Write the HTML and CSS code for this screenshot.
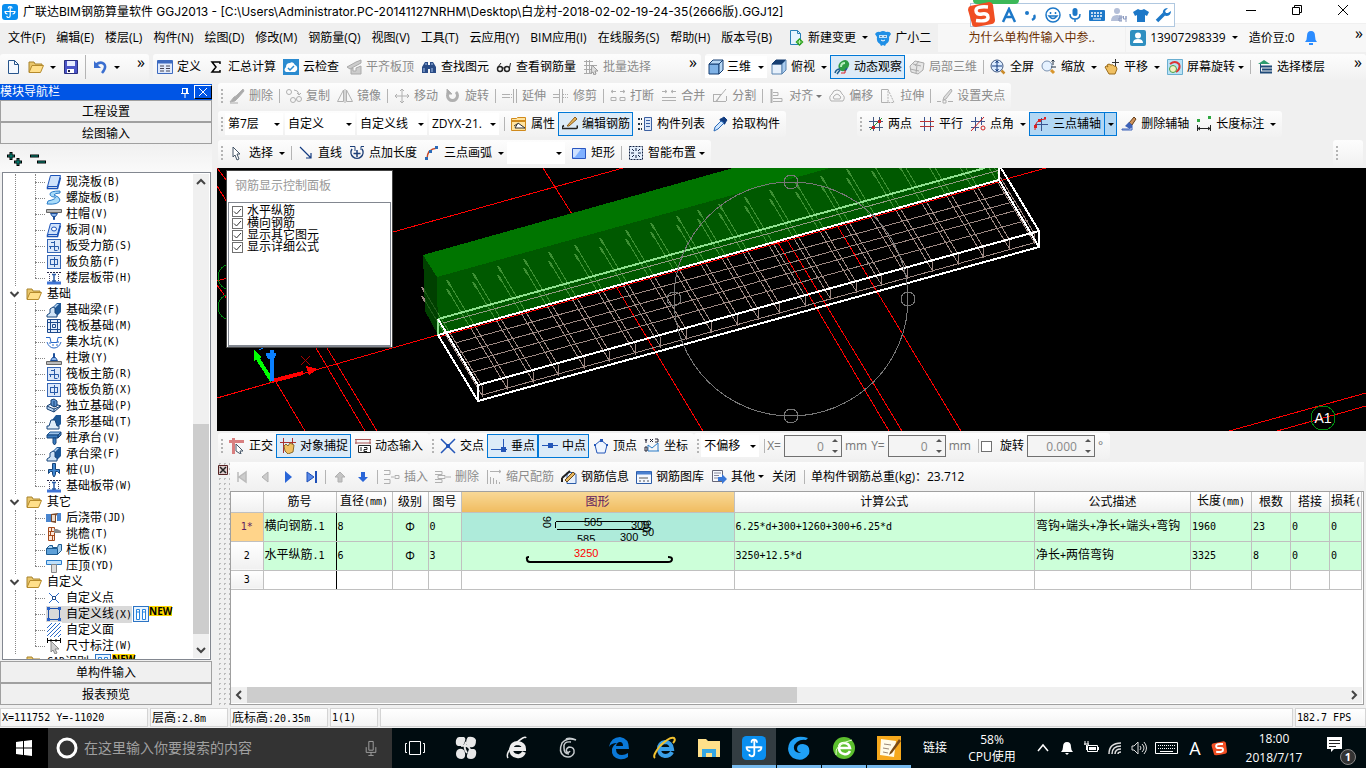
FILE: index.html
```
<!DOCTYPE html>
<html lang="zh-CN">
<head>
    <meta charset="UTF-8">
    <meta name="viewport" content="width=device-width, initial-scale=1.0">
    <title>广联达BIM钢筋算量软件 GGJ2013</title>
    <link rel="stylesheet" href="styles.css">
</head>
<body>
    <!-- shared icons -->
    <svg class="sprite" aria-hidden="true">
        <symbol id="logo" viewBox="0 0 16 16"><rect width="16" height="16" rx="3" fill="#0a8ff0"/><path d="M10 4.500q0-2-2-2t-1.500 2M8.200 3v8.500q0 2-1.700 2t-1.500-1.500M3 7.500h10M3 7q0 3 2.500 3M13 7q0 3-2.500 3" stroke="#fff" stroke-width="1.200" fill="none"/></symbol>
        <symbol id="folder" viewBox="0 0 16 16"><path d="M1 13V3h5l1 2h7v2" fill="#e9c66b" stroke="#a8832c"/><path d="M1 13.500L4 6.500h11.500l-3 7z" fill="#ffdf8a" stroke="#b58a2c"/></symbol>
        <symbol id="slab" viewBox="0 0 16 16"><path d="M4.500 1.500h10l-3 11h-10z" fill="#cfe2fb" stroke="#1a52b8"/><path d="M1.500 12.500v2h10l3-11" fill="none" stroke="#1a52b8" stroke-width="1.500"/></symbol>
        <symbol id="rebar" viewBox="0 0 16 16"><rect x="1.500" y="1.500" width="13" height="13" fill="#dce8fa" stroke="#3566b5"/><path d="M4 5.500h8M4 10.500h8M8.500 3v10M4.500 5v6M11.500 5v6" stroke="#2a5ba8" fill="none"/></symbol>
        <symbol id="cross" viewBox="0 0 16 16"><rect x="1.500" y="1.500" width="13" height="13" fill="#dce8fa" stroke="#3566b5"/><path d="M3 8.500h9.500v3M8.500 3v9.500h3M4.500 8v3M8 4.500H5" stroke="#2a5ba8" fill="none"/></symbol>
        <symbol id="band" viewBox="0 0 16 16"><path d="M1 2.500h14" stroke="#224" stroke-dasharray="2 1"/><path d="M1 13h14" stroke="#3f74d6" stroke-width="3"/><path d="M3.500 4v7M12.500 4v7" stroke="#446" stroke-dasharray="1 1"/><path d="M8 4v8M6 4.500h4M6 11h4" stroke="#2a5ba8" stroke-width="1.500"/></symbol>
        <symbol id="beam" viewBox="0 0 16 16"><path d="M6 6L11 1h4v9l-4 4z" fill="#1d5796"/><path d="M7 6l4-4h2L9 6z" fill="#b7d6f3"/><path d="M1 15v-2l3-2V7l3-2 2 1v5l2 1v3z" fill="#cfe3f6" stroke="#17457a"/></symbol>
        <symbol id="pile" viewBox="0 0 16 16"><path d="M1 5l3-3h11l-3 3z" fill="#9cc3ea" stroke="#1d5796"/><path d="M1 5h11v3H1zM12 5l3-3v3l-3 3z" fill="#3a7cc0" stroke="#17457a"/><path d="M7 8h3v5l-1.500 2L7 13z" fill="#3a7cc0" stroke="#17457a"/></symbol>
        <symbol id="twin" viewBox="0 0 16 16"><rect x=".5" y=".5" width="15" height="15" fill="#eaf5ff" stroke="#2d74c4"/><path d="M3.500 3.500h3v10h-3zM9.500 3.500h3v10h-3zM4 6h2M10 6h2" fill="#fff" stroke="#2684e0"/></symbol>
        <symbol id="ssogou" viewBox="0 0 28 26"><path d="M3 5L22 1q3 0 4 3l2 15q0 3-3 4L9 26q-4 0-4-3L1 9q0-3 2-4z" fill="#f04e23"/><path d="M21 6Q9 5 9 9.500t6 3.500 6 3.500-12 3" fill="none" stroke="#fff" stroke-width="3.500"/></symbol>
    </svg>

    <header class="titlebar">
        <svg class="ico"><use href="#logo"/></svg>
        <h1>广联达BIM钢筋算量软件 GGJ2013 - [C:\Users\Administrator.PC-20141127NRHM\Desktop\白龙村-2018-02-02-19-24-35(2666版).GGJ12]</h1>
        <div class="win-btns">
            <button aria-label="最小化"><svg class="ico" viewBox="0 0 16 16"><path d="M3 8.500h10" stroke="#000"/></svg></button>
            <button aria-label="还原"><svg class="ico" viewBox="0 0 16 16"><path d="M3.500 5.500h7v7h-7zM5.500 5V3.500h7v7H11" stroke="#000"/></svg></button>
            <button aria-label="关闭"><svg class="ico" viewBox="0 0 16 16"><path d="M3 3l10 10M13 3L3 13" stroke="#000"/></svg></button>
        </div>
    </header>

    <nav class="menubar">
        <button>文件(F)</button><button>编辑(E)</button><button>楼层(L)</button><button>构件(N)</button><button>绘图(D)</button><button>修改(M)</button><button>钢筋量(Q)</button><button>视图(V)</button><button>工具(T)</button><button>云应用(Y)</button><button>BIM应用(I)</button><button>在线服务(S)</button><button>帮助(H)</button><button>版本号(B)</button>
        <button class="tb change"><svg class="ico" viewBox="0 0 16 16"><path d="M2.500.5h7l3 3v11h-10z" fill="#e6f4ff" stroke="#2a80b8"/><path d="M9.500.5v3h3" stroke="#2a80b8"/><path d="M11.500 8l4 4-4 4-4-4z" fill="#2ea31e"/><path d="M9.500 12h4M11.500 10v4" stroke="#bdf0b0"/></svg>新建变更<i class="dd"></i></button>
        <button class="tb"><svg class="ico" viewBox="0 0 16 16"><path d="M0 4q2-3 5-2 3-2 6 0 4-1 5 2l-2 3q1 5-3 7l-1 2-2-1-2 1-1-2Q1 12 2 7z" fill="#1f8fe6"/><path d="M4 5h8v3H4z" fill="#bfe4ff"/><path d="M6 6v1M10 6v1" stroke="#124"/><path d="M6 10q2 2 4 0" stroke="#fff"/></svg>广小二</button>
        <a class="tip" href="#">为什么单构件输入中参..</a>
        <div class="account">
            <button class="tb"><svg class="ico" viewBox="0 0 16 16"><rect width="16" height="16" rx="2" fill="#2f8fc0"/><circle cx="8" cy="5.500" r="3" fill="#fff"/><path d="M3 13q0-4 5-4t5 4z" fill="#fff"/></svg>13907298339<i class="dd"></i></button>
            <span class="beans">造价豆:0</span>
            <svg class="ico" viewBox="0 0 16 16"><path d="M2 12q2-2 2-6 0-5 4-5t4 5q0 4 2 6z" fill="#2b8cff"/><path d="M6 14h4" stroke="#2b8cff" stroke-width="2"/></svg>
            <button class="more">»</button>
        </div>
    </nav>

    <div class="toolrow main-tools">
        <div class="group g-file">
            <button class="tb" aria-label="新建"><svg class="ico" viewBox="0 0 16 16"><path d="M3.500 1.500h6l4 4v9h-10z" fill="#f4f9ff" stroke="#27558c"/><path d="M9.500 1.500v4h4" stroke="#27558c"/></svg></button>
            <button class="tb" aria-label="打开"><svg class="ico"><use href="#folder"/></svg><i class="dd"></i></button>
            <button class="tb" aria-label="保存"><svg class="ico" viewBox="0 0 16 16"><path d="M1.500 1.500h13v13h-13z" fill="#4b55c8" stroke="#2a2f80"/><path d="M4 2h8v5H4z" fill="#e8ecff"/><path d="M4 10h7v4H4z" fill="#fff"/><path d="M6 11v2" stroke="#224" stroke-width="2"/></svg></button>
            <i class="sep tall"></i>
            <button class="tb" aria-label="撤销"><svg class="ico" viewBox="0 0 16 16"><path d="M4 5.500Q9 2 12 5t-2 9" stroke="#3b6fd0" stroke-width="2.500"/><path d="M2 2v7h7z" fill="#3b6fd0"/></svg><i class="dd"></i></button>
            <button class="more">»</button>
        </div>
        <div class="group g-calc">
            <button class="tb"><svg class="ico" viewBox="0 0 16 16"><path d="M.5 1.500h15v13H.5z" fill="#dfe9fb" stroke="#3d6ac0"/><path d="M1 3h14" stroke="#3d6ac0" stroke-width="3"/><path d="M3 7h4M3 9.500h4M3 12h4M9 7h4M9 9.500h4M9 12h4" stroke="#445"/></svg>定义</button>
            <button class="tb"><svg class="ico" viewBox="0 0 16 16"><path d="M12 5V3H4l4 5-4 5h8v-2" stroke="#000" stroke-width="1.500"/></svg>汇总计算</button>
            <button class="tb"><svg class="ico" viewBox="0 0 16 16"><path d="M0 0h16v16H0z" fill="#2b8bd0"/><path d="M3 13q-3-2 0-5 0-4 4-4 3-2 5 2 3 1 2 5l-2 2z" fill="#fff"/><path d="M5 9l2 2 4-4" stroke="#2b8bd0" stroke-width="1.500"/></svg>云检查</button>
            <button class="tb" disabled><svg class="ico" viewBox="0 0 16 16"><path d="M1 8l9-5 5-2v3L4 10zM5 10v5h10V7l-5 2v3H7v-3z" fill="#ccc" stroke="#aaa"/></svg>平齐板顶</button>
            <button class="tb"><svg class="ico" viewBox="0 0 16 16"><path d="M4 3h3v11H1V8zM9 3h3l3 5v6H9zM7 6h2v4H7z" fill="#2a4c86"/><path d="M3 9v4M11 9v4M5 4v2M11 4v2" stroke="#a9c5ee"/></svg>查找图元</button>
            <button class="tb"><svg class="ico" viewBox="0 0 16 16"><circle cx="4" cy="10" r="2.500" stroke="#222" stroke-width="1.500"/><circle cx="11" cy="10" r="2.500" stroke="#222" stroke-width="1.500"/><path d="M2 8l3-4M13.500 9l1-5M6.500 9h2" stroke="#222"/></svg>查看钢筋量</button>
            <button class="tb" disabled><svg class="ico" viewBox="0 0 16 16"><path d="M1 2.500h9M1 6.500h13M1 10.500h8M1 14.500h8M3.500 1v14M6.500 1v14" stroke="#aaa"/><path d="M9 6l6 6h-3l1 3-2 1-1-3-2 1z" fill="#ddd" stroke="#999"/></svg>批量选择</button>
            <button class="more">»</button>
        </div>
        <div class="group g-view">
            <span class="combo iconed"><svg class="ico" viewBox="0 0 16 16"><path d="M1 5h10v10H1z" fill="#7fb2e6" stroke="#163f73"/><path d="M1 5l4-4h10l-4 4zM11 5l4-4v10l-4 4z" fill="#b9d8f5" stroke="#163f73"/></svg><select aria-label="视图模式"><option>三维</option></select></span>
            <button class="tb"><svg class="ico" viewBox="0 0 16 16"><path d="M1 5h10v10H1z" fill="#e6f0fb" stroke="#5a84b0"/><path d="M1 5l4-4h10l-4 4z" fill="#163f73" stroke="#163f73"/><path d="M11 5l4-4v10l-4 4z" fill="#a9cbee" stroke="#5a84b0"/></svg>俯视<i class="dd"></i></button>
            <button class="tb on"><svg class="ico" viewBox="0 0 16 16"><path d="M5 10Q3 5 8 2t7 2q1 4-3 7t-7-1z" fill="#2e9b45"/><path d="M7 8q0-4 4-4" stroke="#b8f0c0" stroke-width="2"/><path d="M1 14q1-4 5-4M3 15l3-4M11 12l2-3" stroke="#1e5f8f" stroke-width="1.500"/><path d="M7 14h4v-3" stroke="#d22"/></svg>动态观察</button>
            <button class="tb" disabled><svg class="ico" viewBox="0 0 16 16"><path d="M1 7l5-5 9 2-1 7-5 4-7-2zM4 5l8 2M1 10l9 2M10 2l-4 5M8 6l-1 8" fill="#e6e6e6" stroke="#aaa"/></svg>局部三维</button>
            <i class="sep"></i>
            <button class="tb"><svg class="ico" viewBox="0 0 16 16"><circle cx="7" cy="7" r="6" fill="#dcecff" stroke="#405880"/><path d="M7 2v10M2 7h10M5.500 4L7 2l1.500 2M5.500 10L7 12l1.500-2" stroke="#123a80"/><path d="M11.500 11.500l3 3" stroke="#c98a2a" stroke-width="2.500"/></svg>全屏</button>
            <button class="tb"><svg class="ico" viewBox="0 0 16 16"><circle cx="6" cy="7" r="5" fill="#e6f2ff" stroke="#7b92b0"/><path d="M10 11l3 3" stroke="#d8952c" stroke-width="3"/><path d="M12 1v5M10.500 2.500L12 1l1.500 1.500M10 8h5" stroke="#234"/></svg>缩放<i class="dd"></i></button>
            <button class="tb"><svg class="ico" viewBox="0 0 16 16"><path d="M1 8q1-2 3 0l-1-2q2-2 4 0 2-1 3 1 3 0 3 3l-2 5H5z" fill="#f0c062" stroke="#9b6c1c"/><path d="M11.500 0v7M8 3.500h7" stroke="#333"/></svg>平移<i class="dd"></i></button>
            <button class="tb"><svg class="ico" viewBox="0 0 16 16"><path d="M.5.5h15v15H.5z" fill="#b9e2f5" stroke="#6aaed0"/><path d="M3 5q5-4 9 0 2 5-3 8" stroke="#d33" stroke-width="2"/><circle cx="6" cy="10" r="3.500" fill="#f5f0c0" stroke="#49a048"/></svg>屏幕旋转<i class="dd tight"></i></button>
            <i class="sep"></i>
            <button class="tb"><svg class="ico" viewBox="0 0 16 16"><path d="M1 5l6-4 6 4z" fill="#2c9b6e"/><path d="M3 7.500h12M5 10.500h10M3 13.500h12" stroke="#1f4a78" stroke-width="2"/><path d="M3.500 5v9" stroke="#1f4a78"/></svg>选择楼层</button>
            <button class="more">»</button>
        </div>
    </div>

    <main class="workspace">
        <aside class="sidebar">
            <div class="side-head"><h2>模块导航栏</h2>
                <button class="pin" aria-label="固定"><svg viewBox="0 0 12 12"><path d="M3.500 2v5M8.500 2v5M3 2.500h6M2 7.500h8M6 8v4M7.500 3v4" stroke="#fff"/></svg></button>
                <button class="x" aria-label="关闭"><svg viewBox="0 0 12 12"><path d="M2 2l8 8M10 2l-8 8" stroke="#fff"/></svg></button>
            </div>
            <button class="side-btn">工程设置</button>
            <button class="side-btn">绘图输入</button>
            <div class="tree-tools">
                <button aria-label="全部展开"><svg class="ico" viewBox="0 0 16 16"><path d="M0 5h8M4 1v8M7 11h8M11 7v8" stroke="#000" stroke-width="3"/><path d="M1 5h6M4 2v6M8 11h6M11 8v6" stroke="#0a9a8a"/></svg></button>
                <button aria-label="全部折叠"><svg class="ico" viewBox="0 0 16 16"><path d="M0 5h9M7 11h9" stroke="#000" stroke-width="3"/><path d="M1 5h7M8 11h7" stroke="#0a9a8a"/></svg></button>
            </div>
            <div class="tree">
                <ul class="tree-list">
                    <li class="branch"><ul>
                        <li><svg class="ico"><use href="#slab"/></svg>现浇板<span class="n">(B)</span></li>
                        <li><svg class="ico" viewBox="0 0 16 16"><path d="M14 1Q4 1 4 4t5 3q2 2-7 4l-1 3q12 1 13-4 0-3-6-5 1-2 6-2z" fill="#a8dcfa" stroke="#2a7cc8"/></svg>螺旋板<span class="n">(B)</span></li>
                        <li><svg class="ico" viewBox="0 0 16 16"><path d="M.5 3.500h15v3H.5z" fill="#bbb" stroke="#666"/><path d="M4.500 7.500h7l-2 3h-3zM7.500 10.500h1v3h-1z" fill="#8ab4ea" stroke="#1d4f9a"/></svg>柱帽<span class="n">(V)</span></li>
                        <li><svg class="ico" viewBox="0 0 16 16"><use href="#slab"/><ellipse cx="8" cy="7" rx="2.500" ry="2" fill="#fff" stroke="#1a52b8"/></svg>板洞<span class="n">(N)</span></li>
                        <li><svg class="ico"><use href="#cross"/></svg>板受力筋<span class="n">(S)</span></li>
                        <li><svg class="ico"><use href="#rebar"/></svg>板负筋<span class="n">(F)</span></li>
                        <li><svg class="ico"><use href="#band"/></svg>楼层板带<span class="n">(H)</span></li>
                    </ul></li>
                    <li class="branch"><div class="node"><svg class="chev" viewBox="0 0 10 10"><path d="M1 3l4 4 4-4" stroke="#444" stroke-width="2"/></svg><svg class="ico"><use href="#folder"/></svg>基础</div><ul>
                        <li><svg class="ico"><use href="#beam"/></svg>基础梁<span class="n">(F)</span></li>
                        <li><svg class="ico" viewBox="0 0 16 16"><path d="M1.500 1.500h13v13h-13zM4.500 4.500h7v7h-7zM6.500 6.500h3v3h-3zM4.500 1v14M11.500 1v14M1 4.500h14M1 11.500h14" stroke="#1d4a8c" fill="#e4eefc"/></svg>筏板基础<span class="n">(M)</span></li>
                        <li><svg class="ico" viewBox="0 0 16 16"><path d="M0 3.500h4l1 5h6l1-5h4M1 8q2 6 7 6t7-6" stroke="#2a6ac8"/><path d="M3 9h2M6 11h2M10 11h2M11 8h2" stroke="#2a6ac8"/></svg>集水坑<span class="n">(K)</span></li>
                        <li><svg class="ico" viewBox="0 0 16 16"><path d="M.5 11.500h15v3H.5z" fill="#bbb" stroke="#666"/><path d="M4.500 10.500l2-3h3l2 3zM7.500 3.500h1v4h-1z" fill="#8ab4ea" stroke="#1d4f9a"/></svg>柱墩<span class="n">(Y)</span></li>
                        <li><svg class="ico"><use href="#cross"/></svg>筏板主筋<span class="n">(R)</span></li>
                        <li><svg class="ico"><use href="#rebar"/></svg>筏板负筋<span class="n">(X)</span></li>
                        <li><svg class="ico" viewBox="0 0 16 16"><path d="M1 8l5-3 9 3-7 6-7-3zM1 8l7 3 7-3M8 11v3" fill="#b9d5f2" stroke="#173f70"/><path d="M5 2l3-1 3 2v5l-3 1-3-2zM8 3v6" fill="#5b92cf" stroke="#173f70"/></svg>独立基础<span class="n">(P)</span></li>
                        <li><svg class="ico" viewBox="0 0 16 16"><path d="M6 6L10 1h5v9l-4 4z" fill="#1d5796"/><path d="M1 15v-3h2l2-6h4l2 6h2v3z" fill="#e0edf9" stroke="#17457a"/></svg>条形基础<span class="n">(T)</span></li>
                        <li><svg class="ico"><use href="#pile"/></svg>桩承台<span class="n">(V)</span></li>
                        <li><svg class="ico"><use href="#beam"/></svg>承台梁<span class="n">(F)</span></li>
                        <li><svg class="ico" viewBox="0 0 16 16"><path d="M6.500 1.500h3v6h4v4l-2-2h-2v3L8 15l-1.500-2.500v-3h-2l-2 2v-4h4z" fill="#3f86cf" stroke="#17457a"/></svg>桩<span class="n">(U)</span></li>
                        <li><svg class="ico"><use href="#band"/></svg>基础板带<span class="n">(W)</span></li>
                    </ul></li>
                    <li class="branch"><div class="node"><svg class="chev" viewBox="0 0 10 10"><path d="M1 3l4 4 4-4" stroke="#444" stroke-width="2"/></svg><svg class="ico"><use href="#folder"/></svg>其它</div><ul>
                        <li><svg class="ico" viewBox="0 0 16 16"><path d="M0 4h5v8H0zM11 3h4v8h-4z" fill="#4a86d0"/><path d="M5 4l7-1-2 3v7l-5-1z" fill="#7c4a2a"/><path d="M6 5h3v6H6z" fill="#eddccc"/></svg>后浇带<span class="n">(JD)</span></li>
                        <li><svg class="ico" viewBox="0 0 16 16"><path d="M2.500 1.500h6v13h-6zM2 5.500h6M2 9.500h6M5.500 2v3M4.500 6v3M6.500 10v4" fill="#fbe6d8" stroke="#a54a1c"/><path d="M8 3h3l4 2v2H8" fill="#8a8a8a"/></svg>挑檐<span class="n">(T)</span></li>
                        <li><svg class="ico" viewBox="0 0 16 16"><path d="M.5 6.500h11v6H.5z" fill="#5da0d8" stroke="#1c5a90"/><path d="M.5 6.500l3-3h3v2h5l1-3h3v6l-4 4v-6z" fill="#a8d2f2" stroke="#1c5a90"/></svg>栏板<span class="n">(K)</span></li>
                        <li><svg class="ico" viewBox="0 0 16 16"><path d="M.5 2.500h15v4H.5z" fill="#bfe0fb" stroke="#2a7cc8"/><path d="M5.500 6.500h5v8h-5z" fill="#ddd" stroke="#888"/></svg>压顶<span class="n">(YD)</span></li>
                    </ul></li>
                    <li class="branch"><div class="node"><svg class="chev" viewBox="0 0 10 10"><path d="M1 3l4 4 4-4" stroke="#444" stroke-width="2"/></svg><svg class="ico"><use href="#folder"/></svg>自定义</div><ul>
                        <li><svg class="ico" viewBox="0 0 16 16"><path d="M3 3l10 10M13 3L3 13" stroke="#2a6ac8"/><path d="M6.500 6.500h3v3h-3z" fill="#fff" stroke="#1d4a8c"/></svg>自定义点</li>
                        <li class="picked"><svg class="ico" viewBox="0 0 16 16"><path d="M2.500 2.500h11v11h-11z" stroke="#1d4fa8"/><path d="M1 1h3v3H1zM12 1h3v3h-3zM1 12h3v3H1zM12 12h3v3h-3z" fill="#2a62c8"/></svg><mark>自定义线<span class="n">(X)</span></mark><svg class="ico twin"><use href="#twin"/></svg><b class="new">NEW</b></li>
                        <li><svg class="ico" viewBox="0 0 16 16"><path d="M1 6l5-5M1 10l9-9M1 14L14 1M4 15L15 4M8 15l7-7M12 15l3-3" stroke="#2a6ac8"/></svg>自定义面</li>
                        <li><svg class="ico" viewBox="0 0 16 16"><path d="M1.500 0v5M14.500 0v5M2 2.500h12M5 1v3M10 1v3" stroke="#000"/><path d="M5 3l8 8H9l2 4-2 1-2-4-2 2z" fill="#d0d0d0" stroke="#888"/></svg>尺寸标注<span class="n">(W)</span></li>
                    </ul></li>
                    <li class="branch"><div class="node"><i class="chev"></i><svg class="ico"><use href="#folder"/></svg><span class="n">CAD</span>识别<svg class="ico twin"><use href="#twin"/></svg><b class="new">NEW</b></div></li>
                </ul>
                <div class="vscroll">
                    <svg viewBox="0 0 16 16"><path d="M4 10l4-4 4 4" stroke="#444" stroke-width="2"/></svg>
                    <div class="thumb"></div>
                    <svg viewBox="0 0 16 16"><path d="M4 6l4 4 4-4" stroke="#444" stroke-width="2"/></svg>
                </div>
            </div>
            <button class="side-btn">单构件输入</button>
            <button class="side-btn">报表预览</button>
        </aside>

        <section class="content">
            <div class="toolrow">
                <div class="group"><i class="grip"></i>
                    <button class="tb" disabled><svg class="ico" viewBox="0 0 16 16"><path d="M14 1l-7 7 2 2 6-7zM7 8l2 2-3 3-5 1 4-5z" fill="#aaa"/><path d="M1 15h8" stroke="#aaa"/></svg>删除</button><i class="sep"></i>
                    <button class="tb" disabled><svg class="ico" viewBox="0 0 16 16"><circle cx="3" cy="4" r="2.500"/><circle cx="7" cy="12" r="2.500"/><circle cx="13" cy="11" r="2.500"/><path d="M8 2q4 0 5 4m-2-1l2 2 2-2"/></svg>复制</button>
                    <button class="tb" disabled><svg class="ico" viewBox="0 0 16 16"><path d="M6.500 2v11.500h-6zM9.500 2v11.500h6zM8 1v14"/></svg>镜像</button><i class="sep"></i>
                    <button class="tb" disabled><svg class="ico" viewBox="0 0 16 16"><path d="M8 1v14M1 8h14M6 3l2-2 2 2M6 13l2 2 2-2M3 6L1 8l2 2M13 6l2 2-2 2"/></svg>移动</button>
                    <button class="tb" disabled><svg class="ico" viewBox="0 0 16 16"><path d="M4 4a5 5 0 1 0 7 0" stroke-width="3"/><path d="M2 1v5h5z" fill="#aaa"/></svg>旋转</button><i class="sep"></i>
                    <button class="tb" disabled><svg class="ico" viewBox="0 0 16 16"><path d="M0 6.500h7M0 9.500h7M11.500 1v14M14.500 1v14"/><path d="M7 6.500h4M7 9.500h4" stroke-dasharray="1 1"/></svg>延伸</button>
                    <button class="tb" disabled><svg class="ico" viewBox="0 0 16 16"><path d="M0 6.500h6M0 9.500h6M6.500 1v14M9.500 1v14"/><path d="M10 6.500h6M10 9.500h6" stroke-dasharray="1 1"/></svg>修剪</button><i class="sep"></i>
                    <button class="tb" disabled><svg class="ico" viewBox="0 0 16 16"><path d="M1 3.500h5M10 3.500h5M3 2L1 3.500 3 5M13 2l2 1.500L13 5M1 9.500h5v3H1zM10 9.500h5v3h-5z"/></svg>打断</button>
                    <button class="tb" disabled><svg class="ico" viewBox="0 0 16 16"><path d="M1 3.500h5M10 3.500h5M4 2l2 1.500L4 5M12 2l-2 1.500L12 5M1 9.500h14M1 12.500h14"/></svg>合并</button>
                    <button class="tb" disabled><svg class="ico" viewBox="0 0 16 16"><path d="M1 6.500h9M1 13.500h13M1.500 6v7M14.500 8v5M4 13L14 1M9 6l-4 7"/></svg>分割</button><i class="sep"></i>
                    <button class="tb" disabled><svg class="ico" viewBox="0 0 16 16"><path d="M2.500 1v14" stroke-width="2"/><path d="M4 4.500h5v3H4M4 10.500h9v3H4"/></svg>对齐<i class="dd tight"></i></button>
                    <button class="tb" disabled><svg class="ico" viewBox="0 0 16 16"><path d="M2 13q-3-4 1-7 1-4 5-4t5 4q4 3 1 7zM5 11q-2-2 1-4 2-2 4 0 3 2 1 4z"/></svg>偏移</button>
                    <button class="tb" disabled><svg class="ico" viewBox="0 0 16 16"><path d="M8 1.500H1.500v13H8"/><path d="M8 1.500l6 13H8z" stroke-dasharray="2 1"/></svg>拉伸</button><i class="sep"></i>
                    <button class="tb" disabled><svg class="ico" viewBox="0 0 16 16"><path d="M0 13.500h4M11 13.500h5M6 12h3v3H6z"/><path d="M14 1L7 9l-1 3 3-1 6-8z" fill="#ddd"/></svg>设置夹点</button>
                </div>
            </div>
            <div class="toolrow">
                <div class="group"><i class="grip"></i>
                    <span class="combo s"><select aria-label="楼层"><option>第7层</option></select></span>
                    <span class="combo"><select aria-label="类型"><option>自定义</option></select></span>
                    <span class="combo"><select aria-label="构件类型"><option>自定义线</option></select></span>
                    <span class="combo"><select aria-label="构件"><option>ZDYX-21.</option></select></span>
                    <i class="sep"></i>
                    <button class="tb"><svg class="ico" viewBox="0 0 16 16"><path d="M.5 2.500h5l1-1h8v13H.5z" fill="#ffe3a0" stroke="#d08a1c"/><path d="M1 5h14" stroke="#d08a1c" stroke-width="2"/><path d="M4 12l3-5 7 5zM3 10l3-2" fill="#fff" stroke="#333"/></svg>属性</button>
                    <button class="tb on"><svg class="ico" viewBox="0 0 16 16"><path d="M0 12.500h14q2 0 1-3M0 12.500q0-2 2-3" stroke="#222" stroke-width="1.500"/><path d="M5 10L13 1l2 2-8 7z" fill="#e9b75a" stroke="#8a5a1c"/></svg>编辑钢筋</button>
                    <button class="tb"><svg class="ico" viewBox="0 0 16 16"><path d="M7.500 1.500h7v13h-7z" fill="#dce8fa" stroke="#3b5fa0"/><path d="M9 4.500h4M9 7.500h4M9 10.500h4" stroke="#3b5fa0"/><path d="M1 3h4M1 8h4M1 13h4" stroke="#234" stroke-width="2" stroke-dasharray="2 1"/></svg>构件列表</button>
                    <button class="tb"><svg class="ico" viewBox="0 0 16 16"><path d="M9 3l4 4 2-3-3-3z" fill="#123c80" stroke="#123c80"/><path d="M8 3l5 5" stroke="#123c80" stroke-width="2"/><path d="M9 5L3 11l-1 4 4-2 6-6z" fill="#cfe6ff" stroke="#2a6ab8"/></svg>拾取构件</button>
                </div>
                <div class="group g-axis"><i class="grip"></i>
                    <button class="tb"><svg class="ico" viewBox="0 0 16 16"><path d="M5.500 1v14M11.500 1v14M1 5.500h14M1 11.500h14" stroke="#445a80"/><path d="M2 14L14 2" stroke="#2a9b30"/><path d="M4 10h3v3H4zM10 4h3v3h-3z" fill="#c22"/></svg>两点</button>
                    <button class="tb"><svg class="ico" viewBox="0 0 16 16"><path d="M5.500 1v14M11.500 1v14" stroke="#3b5490"/><path d="M1 5.500h14M1 10.500h14" stroke="#b33"/></svg>平行</button>
                    <button class="tb"><svg class="ico" viewBox="0 0 16 16"><path d="M5.500 1v14M11.500 1v8M1 5.500h14M1 11.500h8" stroke="#3b5490"/><path d="M1 15L14 1" stroke="#c22"/><circle cx="13" cy="12" r="2" stroke="#c22"/></svg>点角<i class="dd"></i></button>
                    <button class="tb on deep"><svg class="ico" viewBox="0 0 16 16"><path d="M8.500 2v13M2 8.500h13" stroke="#3b5490"/><path d="M2 14Q1 3 13 3" stroke="#d22"/><path d="M1 9h3v3H1zM5 3h3v3H5zM11 1h2v2h-2z" fill="#d22"/></svg>三点辅轴<i class="split"><i class="dd"></i></i></button>
                    <button class="tb"><svg class="ico" viewBox="0 0 16 16"><path d="M13 1L8 7l3 2 4-6z" fill="#d0935a" stroke="#623c1a"/><path d="M8 6l4 4-3 3-5-3z" fill="#3d62b8"/><path d="M1 13h7l3-2v3H1z" fill="#dce6ff" stroke="#3d62b8"/></svg>删除辅轴</button>
                    <button class="tb"><svg class="ico" viewBox="0 0 16 16"><path d="M1 3h3v3H1zM12 0h3v3h-3z" fill="#2fa840"/><path d="M1.500 9v6M14.500 9v6M2 12.500h12M4 11l-2 1.500L4 14M12 11l2 1.500-2 1.500" stroke="#222"/></svg>长度标注<i class="dd"></i></button>
                </div>
            </div>
            <div class="toolrow draw">
                <div class="group"><i class="grip"></i>
                    <button class="tb"><svg class="ico" viewBox="0 0 16 16"><path d="M4 2l7 7H8l2 5-2 1-2-5-2 2z" fill="#fff" stroke="#456"/></svg>选择<i class="dd"></i></button><i class="sep"></i>
                    <button class="tb"><svg class="ico" viewBox="0 0 16 16"><path d="M2 2l11 11M13 8v5H8" stroke="#123a80" stroke-width="1.200"/></svg>直线</button>
                    <button class="tb"><svg class="ico" viewBox="0 0 16 16"><path d="M3 4a6 6 0 1 0 10 0M8 5v7M4.500 8.500h7" stroke="#1d3f78" stroke-width="1.500"/><path d="M1 1.500h5V6M15 1.500h-3V5" stroke="#1d3f78"/></svg>点加长度</button>
                    <button class="tb"><svg class="ico" viewBox="0 0 16 16"><path d="M3 14Q3 4 13 3" stroke="#c64a2a" stroke-width="1.500"/><path d="M1 12h3v3H1zM5 5h3v3H5zM11 1h3v3h-3z" fill="#2a6ab8"/></svg>三点画弧<i class="dd"></i></button>
                    <span class="combo s"><select aria-label="弧参数"><option></option></select></span>
                    <button class="tb"><svg class="ico" viewBox="0 0 16 16"><path d="M1.500 3.500h13v10h-13z" fill="#7fb0ff" stroke="#2a56c0"/><path d="M2 4h8L4 12H2z" fill="#cfe2ff"/></svg>矩形</button><i class="sep"></i>
                    <button class="tb"><svg class="ico" viewBox="0 0 16 16"><path d="M1.500 1.500h13v13h-13z" fill="#e4effc" stroke="#124" stroke-dasharray="2 1"/><path d="M8 3v3M8 10v3M3 8h3M10 8h3M4 4l2 2M12 4l-2 2M4 12l2-2M12 12l-2-2" stroke="#124"/></svg>智能布置<i class="dd tight"></i></button>
                </div>
                <div class="group g-tail"><i class="grip"></i></div>
            </div>

            <div class="viewport">
                <svg class="scene" viewBox="217 168 1149 263" preserveAspectRatio="xMinYMin slice" shape-rendering="crispEdges">
                    <g stroke="red">
                        <path d="M217 398L438 335M393 232L623 168M999 181L1046 168M543 168L572 214M617 288L703 431M777 241L889 431M787 240L902 431M838 227L961 431M276 382L305 431M316 348L365 431M327 348L377 431M217 168L227 181M217 186L227 202M217 281L227 278M217 285L230 303M1229 431L1366 393M1277 431L1366 406M731 168L733 171"/>
                    </g>
                    <g stroke="#008a10"><circle cx="231" cy="277" r="13"/><circle cx="231" cy="307" r="13"/><circle cx="1323" cy="418" r="12"/></g>
                    <!-- stirrups, one per spacing -->
                    <defs><g id="bar"><path d="M422 287L482 386V395L422 296"/><path d="M422 287l4 7M422 296l4 7" stroke-width="2"/></g></defs>
                    <g stroke="#9c8882">
                        <use href="#bar"/><use href="#bar" x="25" y="-7"/><use href="#bar" x="51" y="-14"/><use href="#bar" x="76" y="-21"/><use href="#bar" x="102" y="-28"/><use href="#bar" x="127" y="-35"/><use href="#bar" x="153" y="-42"/><use href="#bar" x="178" y="-49"/><use href="#bar" x="204" y="-57"/><use href="#bar" x="229" y="-64"/><use href="#bar" x="255" y="-71"/><use href="#bar" x="276" y="-77"/><use href="#bar" x="297" y="-83"/><use href="#bar" x="323" y="-90"/><use href="#bar" x="348" y="-97"/><use href="#bar" x="374" y="-104"/><use href="#bar" x="399" y="-111"/><use href="#bar" x="425" y="-118"/><use href="#bar" x="450" y="-125"/><use href="#bar" x="476" y="-132"/><use href="#bar" x="501" y="-139"/><use href="#bar" x="527" y="-147"/><use href="#bar" x="552" y="-153"/>
                        <path d="M455 343L1010 192M460 353L1016 201M465 363L1021 209M470 373L1028 220M482 395L1037 242"/>
                    </g>
                    <path d="M423 255L733 168H830L437 277z" fill="#007500"/>
                    <path d="M423 255L437 277L438 335L425 311z" fill="#005000" fill-opacity=".8"/>
                    <path d="M437 277L830 168H999V180L438 335z" fill="#009400" fill-opacity=".6"/>
                    <path d="M443 323L1000 170" stroke="#8f9a80"/>
                    <path d="M438 319L985 168M438 319V335" stroke="#8fe08f" stroke-width="2"/>
                    <path d="M438 335L999 180" stroke="#fff" stroke-width="2"/>
                    <path d="M438 337L999 182" stroke="red"/>
                    <path d="M438 319L478 385L1039 231L1001 168M438 335L478 401L1039 247L999 180V168M478 385V401M1039 231V247" stroke="#fff" stroke-width="2"/>
                    <g stroke="#777">
                        <circle cx="791" cy="299" r="117"/><circle cx="791" cy="182" r="7"/><circle cx="791" cy="416" r="7"/><circle cx="674" cy="299" r="7"/><circle cx="908" cy="299" r="7"/>
                    </g>
                    <path d="M272 381L303 373" stroke="red" stroke-width="4"/><path d="M318 369L306 366L309 375z" fill="red"/>
                    <path d="M272 381L258 359" stroke="#0f0" stroke-width="4"/><path d="M254 350L254 361L262 357z" fill="#0f0"/>
                    <path d="M272 381V350" stroke="#0a80ff" stroke-width="4"/><path d="M266 353h10l-2 5h-6zM259 350l4-2" fill="#0a80ff" stroke="#0a80ff"/>
                    <path d="M301 356l9 9M310 356l-9 9" stroke="#a00"/>
                    <text x="1323" y="423" class="axis-no">A1</text>
                </svg>
                <div class="float-panel">
                    <h3>钢筋显示控制面板</h3>
                    <div class="checks">
                        <label><input type="checkbox" checked>水平纵筋</label>
                        <label><input type="checkbox" checked>横向钢筋</label>
                        <label><input type="checkbox" checked>显示其它图元</label>
                        <label><input type="checkbox" checked>显示详细公式</label>
                    </div>
                </div>
            </div>

            <div class="toolrow snap">
                <div class="group"><i class="grip"></i>
                    <button class="tb"><svg class="ico" viewBox="0 0 16 16"><path d="M0 3.500h15M4.500 0v16" stroke="#d98080" stroke-width="3"/><path d="M7 6l7 7h-3l1 3-2-1-3-2z" fill="#fff" stroke="#456"/></svg>正交</button>
                    <button class="tb on"><svg class="ico" viewBox="0 0 16 16"><path d="M3.500 0v15M12.500 0v6M0 4.500h16" stroke="#a33"/><path d="M4 8l2-2 2 2 2-3 4 2-1 7-5 2-3-3z" fill="#f0c062" stroke="#8a6a2a"/></svg>对象捕捉</button>
                    <button class="tb"><svg class="ico" viewBox="0 0 16 16"><path d="M0 1.500h16M0 5h16M1 2v4M15 2v4" stroke="#a55"/><path d="M3.500 7.500h12v7h-12zM6 9v4M9 9.500h3v2H9v2h3" stroke="#222" fill="#fff"/></svg>动态输入</button>
                </div>
                <div class="group"><i class="grip"></i>
                    <button class="tb"><svg class="ico" viewBox="0 0 16 16"><path d="M1 1l14 14M15 1L1 15" stroke="#2456b8" stroke-width="1.500"/><path d="M6 6h4v4H6z" fill="#2456b8"/></svg>交点</button>
                    <button class="tb on"><svg class="ico" viewBox="0 0 16 16"><path d="M0 11.500h16M12.500 1v12" stroke="#2456b8"/><path d="M10 9h5v5h-5z" fill="#2456b8"/></svg>垂点</button>
                    <button class="tb on"><svg class="ico" viewBox="0 0 16 16"><path d="M0 7.500h16" stroke="#2456b8"/><path d="M6 5h5v5H6z" fill="#2456b8"/></svg>中点</button>
                    <button class="tb"><svg class="ico" viewBox="0 0 16 16"><path d="M8 2l6 5-2 8H4L2 7z" fill="#eef5ff" stroke="#2456b8"/><path d="M7 1h3v3H7zM1 6h2v2H1zM13 6h2v2h-2z" fill="#2456b8"/></svg>顶点</button>
                    <button class="tb"><svg class="ico" viewBox="0 0 16 16"><path d="M4 13V7l4 3 6-5v8M4 13h11" stroke="#2a7cc8"/><path d="M1 1l1 2 1-2M2 3v2M1 9h2v4H1zM6 1l3 3M9 1L6 4M11 1h3v3h-3" stroke="#223"/></svg>坐标</button>
                </div>
                <div class="group"><i class="grip"></i>
                    <span class="combo s"><select aria-label="偏移方式"><option>不偏移</option></select></span><i class="sep"></i>
                    <label class="num">X=<span class="spin"><input type="text" value="0" disabled></span>mm</label>
                    <label class="num">Y=<span class="spin"><input type="text" value="0" disabled></span>mm</label><i class="sep"></i>
                    <label class="rot"><input type="checkbox">旋转</label>
                    <label class="num"><span class="spin wide"><input type="text" value="0.000" aria-label="角度" disabled></span>°</label>
                </div>
            </div>

            <div class="rebar">
                <div class="rebar-grip"><button aria-label="关闭"><svg viewBox="0 0 10 10"><path d="M.5.5h9v9h-9z" fill="#dcc" stroke="#522"/><path d="M2 2l6 6M8 2L2 8" stroke="#222" stroke-width="1.500"/></svg></button></div>
                <div class="rebar-body">
                    <div class="toolrow rebar-tools">
                        <button class="tb" aria-label="第一条" disabled><svg class="ico" viewBox="0 0 16 16"><path d="M4 3v10M12 3v10L5 8z" fill="#ccc" stroke="#bbb" stroke-width="1.500"/></svg></button>
                        <button class="tb" aria-label="上一条" disabled><svg class="ico" viewBox="0 0 16 16"><path d="M11 3v10L5 8z" fill="#ccc"/></svg></button>
                        <button class="tb" aria-label="下一条"><svg class="ico" viewBox="0 0 16 16"><path d="M5 2v12l7-6z" fill="#2a66d8"/></svg></button>
                        <button class="tb" aria-label="最后一条"><svg class="ico" viewBox="0 0 16 16"><path d="M4 3v10l7-5z" fill="#5a8ae8" stroke="#1d4fb8"/><path d="M13 2v12" stroke="#1d4fb8" stroke-width="2"/></svg></button>
                        <i class="sep"></i>
                        <button class="tb" aria-label="上移" disabled><svg class="ico" viewBox="0 0 16 16"><path d="M8 3l5 5h-3v5H6V8H3z" fill="#c4c4c4"/></svg></button>
                        <button class="tb" aria-label="下移"><svg class="ico" viewBox="0 0 16 16"><path d="M8 13l5-5h-3V3H6v5H3z" fill="#2a66d8"/></svg></button>
                        <i class="sep"></i>
                        <button class="tb" disabled><svg class="ico" viewBox="0 0 16 16"><path d="M0 1.500h6v4H0M0 10.500h6v4H0M7 8h3"/><path d="M11 6.500h4v3h-4z"/></svg>插入</button>
                        <button class="tb" disabled><svg class="ico" viewBox="0 0 16 16"><path d="M0 2.500h7v3H0M0 10.500h7v3H0M3 6.500h7v3H3zM11 8h5"/></svg>删除</button>
                        <button class="tb" disabled><svg class="ico" viewBox="0 0 16 16"><path d="M1.500 1v14M4 2.500h11M4.500 8v7M7.500 9v6M10.500 11v4M13.500 13v2M13 1l2 1.500L13 4"/></svg>缩尺配筋</button>
                        <button class="tb"><svg class="ico" viewBox="0 0 16 16"><path d="M6 3.500h7l2 2v9H6z" fill="#e6effc" stroke="#2a5ba8"/><path d="M1 9l8-7M1 9v4" stroke="#222" stroke-width="2"/><path d="M4 11l8-8 2 2-8 8z" fill="#e8b860" stroke="#6a4a1a"/></svg>钢筋信息</button>
                        <button class="tb"><svg class="ico" viewBox="0 0 16 16"><path d="M.5 2.500h15v12H.5z" fill="#f4f8ff" stroke="#2a5ba8"/><path d="M1 4h14" stroke="#4a80d0" stroke-width="3"/><path d="M3 9h9M3 12h2M7 12h2M11 12h2" stroke="#555"/></svg>钢筋图库</button>
                        <button class="tb"><svg class="ico" viewBox="0 0 16 16"><path d="M1.500 1.500h10v11h-10z" fill="#f6f9ff" stroke="#667"/><path d="M3 4h7M3 6.500h5M3 9h4" stroke="#889"/><path d="M7 8h4V5l5 5-5 5v-3H7z" fill="#3a78d8"/></svg>其他<i class="dd tight"></i></button>
                        <button class="tb plain">关闭</button>
                        <i class="sep"></i>
                        <output class="total">单构件钢筋总重(kg)：23.712</output>
                    </div>
                    <div class="grid-wrap">
                        <table class="grid">
                            <colgroup><col class="c-idx"><col class="c-name"><col class="c-dia"><col class="c-lvl"><col class="c-no"><col class="c-shape"><col class="c-formula"><col class="c-desc"><col class="c-len"><col class="c-cnt"><col class="c-cnt"><col class="c-loss"></colgroup>
                            <thead><tr><th></th><th>筋号</th><th>直径<span class="n">(mm)</span></th><th>级别</th><th>图号</th><th class="hot">图形</th><th>计算公式</th><th>公式描述</th><th>长度<span class="n">(mm)</span></th><th>根数</th><th>搭接</th><th class="left">损耗<span class="n">(</span></th></tr></thead>
                            <tbody>
                                <tr class="filled current"><th class="n">1*</th><td>横向钢筋<span class="n">.1</span></td><td class="n">8</td><td class="mid">Φ</td><td class="n">0</td>
                                    <td class="shape"><svg viewBox="523 512 150 28" class="shape-svg"><path d="M556 520.500h90M557 528.500h86M555.500 521v6" stroke="#000"/><text x="584" y="525">505</text><text x="631" y="528">300</text><text x="642" y="535">50</text><text x="577" y="542">585</text><text x="620" y="540">300</text><text transform="translate(543 515) rotate(90)">90</text><text transform="translate(643 519) rotate(90)">90</text></svg></td>
                                    <td class="n">6.25*d+300+1260+300+6.25*d</td><td>弯钩<span class="n">+</span>端头<span class="n">+</span>净长<span class="n">+</span>端头<span class="n">+</span>弯钩</td><td class="n">1960</td><td class="n">23</td><td class="n">0</td><td class="n">0</td></tr>
                                <tr class="filled"><th class="n">2</th><td>水平纵筋<span class="n">.1</span></td><td class="n">6</td><td class="mid">Φ</td><td class="n">3</td>
                                    <td class="shape"><svg viewBox="523 541 150 28" class="shape-svg"><path d="M529 556q-3 0-2 2 0 3 3 3h138q4 0 4-3 0-2-4-2" stroke="#000" stroke-width="2"/><text x="574" y="556" fill="red">3250</text></svg></td>
                                    <td class="n">3250+12.5*d</td><td>净长<span class="n">+</span>两倍弯钩</td><td class="n">3325</td><td class="n">8</td><td class="n">0</td><td class="n">0</td></tr>
                                <tr class="blank"><th class="n">3</th><td></td><td></td><td></td><td></td><td></td><td></td><td></td><td></td><td></td><td></td><td></td></tr>
                            </tbody>
                        </table>
                        <div class="hscroll">
                            <svg viewBox="0 0 16 16"><path d="M10 4L6 8l4 4" stroke="#444" stroke-width="2"/></svg>
                            <div class="track"><div class="thumb"></div></div>
                            <svg viewBox="0 0 16 16"><path d="M6 4l4 4-4 4" stroke="#444" stroke-width="2"/></svg>
                        </div>
                    </div>
                </div>
            </div>
        </section>
    </main>

    <footer class="statusbar">
        <span class="s-pos n">X=111752 Y=-11020</span><span class="s-h">层高<span class="n">:2.8m</span></span><span class="s-b">底标高<span class="n">:20.35m</span></span><span class="s-c n">1(1)</span><span class="s-fill"></span><span class="s-fps n">182.7 FPS</span>
    </footer>

    <div class="taskbar">
        <button class="start" aria-label="开始"><svg viewBox="0 0 16 16"><path d="M0 2l7-1v6.500H0zM8 1l8-1v7.500H8zM0 8.500h7V15l-7-1zM8 8.500h8V16l-8-1z" fill="#fff"/></svg></button>
        <label class="search"><svg viewBox="0 0 22 22"><circle cx="11" cy="11" r="9" stroke="#fff" stroke-width="3"/></svg><input type="text" placeholder="在这里输入你要搜索的内容"><svg class="mic" viewBox="0 0 16 20"><path d="M5.500 2.500h5v10h-5zM2.500 9v6h11V9M8 15v3M5 18.500h6" stroke="#aaa"/></svg></label>
        <div class="apps">
            <button aria-label="任务视图"><svg viewBox="0 0 24 24"><path d="M6.500 5.500h11v13h-11zM4 7.500H2.500v9H4M20 7.500h1.500v9H20" stroke="#fff"/></svg></button>
            <button aria-label="应用"><svg viewBox="0 0 24 24"><path d="M5 1h5q2 1 1 4l-2 5H4Q1 9 2 4q1-3 3-3zM14 1q6-1 8 3 0 6-3 7-5 1-7-3 0-5 2-7zM15 13h5q3 1 2 6-1 4-5 4-5 0-4-4zM5 13q5-1 6 4 1 5-3 6-6 0-6-5 0-4 3-5z" fill="#e8e8e8"/><path d="M7 10q6-2 9 3M12 6q-3 6 1 11" stroke="#e8e8e8" stroke-width="2"/></svg></button>
            <button aria-label="浏览器"><svg viewBox="0 0 24 24"><path d="M19 16q-2 5-7 4-6-1-6-7 1-6 7-6 6 1 6 6H7" stroke="#eee" stroke-width="4"/><path d="M3 22q-3-5 7-14T21 2" stroke="#eee" stroke-width="1.500"/></svg></button>
            <button aria-label="广联达"><svg viewBox="0 0 24 24"><path d="M20 4q-9-3-14 3-4 9 2 13 7 3 10-3 1-6-5-6-4 2-2 5 2 1 3-1M15 6Q7 5 8 12q0 6 5 6M10 3q4-2 10 1" stroke="#c8cdd0" stroke-width="1.500"/></svg></button>
            <button aria-label="Edge"><svg viewBox="0 0 24 24"><path d="M2 11Q4 1 13 1q9 1 9 12H9q0 6 6 6 3 0 6-2v4q-4 3-9 2-8-2-7-10 1-4 5-6-6 0-8 4zM9 10h7q0-4-3-4t-4 4z" fill="#0a78d8"/></svg></button>
            <button aria-label="IE"><svg viewBox="0 0 24 24"><path d="M20 16q-2 4-7 4-6-1-6-7 0-6 6-7 6 0 7 7H8" stroke="#3a9fe8" stroke-width="4"/><path d="M3 22Q0 20 8 10 18 0 22 2q2 2-1 5" stroke="#f2c230" stroke-width="2"/></svg></button>
            <button aria-label="资源管理器"><svg viewBox="0 0 24 24"><path d="M1 3h8l2 2h12v16H1z" fill="#ffe08a"/><path d="M5 21v-8h14v8h-4v-4H9v4z" fill="#35a7e4"/></svg></button>
            <button class="active" aria-label="GGJ2013"><svg><use href="#logo"/></svg></button>
            <button class="open" aria-label="广联达G+"><svg viewBox="0 0 24 24"><path d="M21 2Q9-2 3 6q-5 9 3 16 10 5 16-4 2-9-6-10-6 0-6 5 1 4 5 3-4 2-7-1-3-5 2-9 4-3 9-2z" fill="#1fa0f5"/></svg></button>
            <button class="open" aria-label="360浏览器"><svg viewBox="0 0 24 24"><circle cx="12" cy="12" r="11" fill="#5cbf2e"/><path d="M18 15q-2 4-6 3-5-1-5-6t5-5q5 0 6 5H8" stroke="#fff" stroke-width="2.500"/><path d="M4 19Q2 8 20 4" stroke="#e6ffd0"/></svg></button>
            <button class="open" aria-label="便笺"><svg viewBox="0 0 24 24"><path d="M0 0h24v24H0z" fill="#f6a81c"/><path d="M4 3l15 2-2 16-14-2z" fill="#fffbe8"/><path d="M7 8l7 1M6 12l6 1M6 16l5 1" stroke="#987"/><path d="M22 3l-9 13-1 3 3-2 9-12z" fill="#7a4a16"/></svg></button>
        </div>
        <span class="links">链接</span>
        <span class="cpu">58%<br>CPU使用</span>
        <div class="tray">
            <svg viewBox="0 0 16 16"><path d="M3 11l5-6 5 6" stroke="#fff" stroke-width="1.500"/></svg>
            <svg viewBox="0 0 16 16"><path d="M2 12q2-2 2-5 0-5 4-5t4 5q0 3 2 5zM6 13h4l-2 2z" fill="#fff"/></svg>
            <svg viewBox="0 0 16 16"><path d="M4.500 5.500h10v6h-10zM2 1v4M5 1v4M1 4h5M3.500 5v5M15.500 7v3" stroke="#fff"/><path d="M6 7h7v3H6z" fill="#fff"/></svg>
            <svg viewBox="0 0 16 16"><path d="M2 14Q2 3 14 3M5 14q0-8 9-8M8 14q0-5 6-5M11 14q0-2 3-2" stroke="#ddd" stroke-width="1.500"/></svg>
            <svg viewBox="0 0 16 16"><path d="M1 6h2l4-4v12l-4-4H1zM9 6q2 2 0 4M11 4q4 4 0 8M13 2q5 6 0 12" stroke="#ddd"/></svg>
            <svg class="kb" viewBox="0 0 24 16"><path d="M.5 2.500h22v11H.5zM5 11.500h13" stroke="#fff"/><path d="M3 5.500h18M3 8.500h18" stroke="#fff" stroke-dasharray="1 1"/></svg>
            <span class="ime">A</span>
            <svg viewBox="0 0 28 26"><use href="#ssogou"/></svg>
        </div>
        <time class="clock">18:00<br>2018/7/17</time>
        <button class="notice" aria-label="通知"><svg viewBox="0 0 26 26"><path d="M2 3h15v12H9l-3 3v-3H2z" fill="#fff"/><path d="M4 6.500h11M4 9.500h11M4 12.500h7" stroke="#222"/></svg><b>1</b></button>
    </div>

    <!-- input method bar floating above the window -->
    <div class="imebar">
        <svg class="s-logo" viewBox="0 0 28 26"><use href="#ssogou"/></svg>
        <svg class="ico" viewBox="0 0 16 16"><path d="M2 15L8 2l6 13M4.500 10h7" stroke="#1d78c8" stroke-width="2.500"/></svg>
        <svg class="ico" viewBox="0 0 16 16"><circle cx="4" cy="6" r="2" fill="#1d78c8"/><path d="M11 8q2 3-2 5" stroke="#1d78c8" stroke-width="2.500"/></svg>
        <svg class="ico" viewBox="0 0 16 16"><circle cx="8" cy="8" r="7" stroke="#1d78c8" stroke-width="1.500"/><path d="M5.500 5v2M10.500 5v2M4 9q4 5 8 0z" stroke="#1d78c8" stroke-width="1.500"/></svg>
        <svg class="ico" viewBox="0 0 16 16"><rect x="5.500" y="1" width="5" height="8" rx="2.500" fill="#1d78c8"/><path d="M3 7q0 5 5 5t5-5M8 12v3" stroke="#1d78c8" stroke-width="1.500"/></svg>
        <svg class="ico" viewBox="0 0 16 16"><rect y="3" width="16" height="11" rx="1" fill="#1d78c8"/><path d="M2 6h12M2 9h12" stroke="#fff" stroke-width="1.500" stroke-dasharray="2 1"/><path d="M4 12h8" stroke="#fff"/></svg>
        <svg class="ico" viewBox="0 0 16 16"><circle cx="6" cy="4" r="3" fill="#b4bfd8"/><path d="M0 14q0-6 6-6t5 6z" fill="#b4bfd8"/><path d="M8 9h3v2H8v3h3M12.500 9v3H15V9v6" stroke="#8c9abf"/></svg>
        <svg class="ico" viewBox="0 0 16 16"><path d="M5 2q3 2 6 0l5 3-2 4-2-1v7H4V8L2 9 0 5z" fill="#1d78c8"/></svg>
        <svg class="ico" viewBox="0 0 16 16"><path d="M2 14l7-7" stroke="#1d78c8" stroke-width="3.500"/><path d="M13 1l-3 3 1 2 2 0 3-2q0 5-5 5-4-2-3-5 1-3 5-3z" fill="#1d78c8"/></svg>
    </div>
</body>
</html>
```
FILE: styles.css
```
*{box-sizing:border-box}
body{margin:0;height:100vh;display:flex;flex-direction:column;overflow:hidden;background:#f0f0f0;color:#000;font:12px/16px "Open Sans","Noto Sans CJK SC",sans-serif}
button,input,select{font:inherit;color:inherit}
button{padding:0;border:none;background:none;white-space:nowrap}
h1,h2,h3,ul{margin:0;padding:0;font-size:12px;font-weight:400;list-style:none}
svg{fill:none;flex:none}
.sprite{position:absolute;width:0;height:0}
.ico{width:16px;height:16px}
.n{font-family:"DejaVu Sans Mono","Noto Sans CJK SC",monospace;font-size:10px}

.titlebar{flex:none;height:23px;display:flex;align-items:center;background:#fff;padding-left:2px;gap:5px}
.titlebar h1{flex:1;white-space:nowrap;font-family:Inter,"Noto Sans CJK SC",sans-serif}
.win-btns{display:flex}
.win-btns button{width:46px;height:20px}

.menubar{flex:none;height:29px;display:flex;align-items:center;padding-left:3px}
.menubar>button:not(.tb){padding:0 6px 0 5px}
.menubar .change{margin-left:6px}
.tip{display:flex;align-items:center;justify-content:center;width:187px;height:28px;margin-left:4px;background:#f7f7f7;color:#6b3000;text-decoration:none}
.account{flex:1;display:flex;align-items:center;height:28px;margin-left:1px;background:#f7f7f7}
.beans{margin:0 8px}

.toolrow{flex:none;display:flex;align-items:center;height:28px}
.main-tools{height:30px;margin-bottom:2px;gap:4px}
.group{display:flex;align-items:center;height:26px;margin-left:1px;padding:0 3px;background:linear-gradient(#fdfdfd,#f1f1f1);border-radius:3px}
.main-tools .group{margin:0;padding:0}
.g-file{flex:0 0 149px}
.main-tools .g-file{padding-left:1px}
.g-calc{flex:0 0 548px}
.g-view{flex:1}
.toolrow .g-axis{margin-left:71px}
.draw{height:30px}
.g-tail{width:30px;margin-left:auto;margin-right:3px}
.snap{height:30px}
.snap .group+.group{margin-left:0}
.grip{flex:none;width:2px;height:14px;margin-right:2px;background:repeating-linear-gradient(#b4b4b4 0 2px,transparent 2px 4px)}
.sep{flex:none;width:1px;height:14px;margin:0 2px 0 3px;background:#b4b4b4}
.sep.tall{height:24px}
.tb{flex:none;display:flex;align-items:center;gap:4px;height:24px;padding:0 2px 0 3px;border:1px solid transparent}
.tb:disabled{color:#8c8c8c}
.tb:disabled svg{stroke:#b0b0b0}
.tb.on{background:#dcebf8;border-color:#0078d7}
.tb.on.deep{background:#b2d7f4;padding-right:0}
.tb.plain{padding:0 4px}
.dd{flex:none;margin-left:2px;border:3px solid transparent;border-top-color:#000;border-bottom:none}
.dd.tight{margin-left:-1px}
.tb:disabled .dd{border-top-color:#777}
.split{display:flex;align-items:center;height:22px;padding:0 2px 0 1px;margin-left:-1px;border-left:1px solid #0078d7}
.more{margin-left:auto;padding:0 4px 10px;font-size:16px}
.account .more{padding-right:3px}

.combo{position:relative;flex:none;width:70px;height:22px;margin-right:2px;background:#fff}
.combo.s{width:58px}
.combo select{width:100%;height:22px;padding:0 12px 0 3px;border:none;background:none;appearance:none}
.combo::after{content:"";position:absolute;right:3px;top:10px;border:3px solid transparent;border-top-color:#000;border-bottom:none}
.combo.iconed{display:flex;align-items:center;width:62px;margin:0;padding-left:3px}
.combo.iconed select{width:43px;padding:0 0 0 3px}

.workspace{flex:1;min-height:0;display:flex}
.sidebar{flex:none;width:212px;display:flex;flex-direction:column;padding-bottom:1px}
.side-head{display:flex;align-items:center;height:16px;background:#0055e5;color:#fff}
.side-head h2{flex:1}
.side-head svg{display:block;width:12px;height:12px}
.side-head .pin{margin-right:3px}
.side-head .x{width:18px;height:14px;border:1px solid #fff;border-right-color:#000;border-bottom-color:#000;display:flex;justify-content:center}
.side-btn{flex:none;height:22px;padding-top:2px;border:1px solid #a0a0a0;background:#f0f0f0}
.tree-tools{flex:none;display:flex;align-items:center;height:28px;padding:2px 7px 0;gap:7px;background:linear-gradient(#f0f0f0,#fafafa)}
.tree-tools svg{display:block}
.tree{flex:1;min-height:0;display:flex;margin:0 1px 1px 2px;padding:1px;border:1px solid #828790;background:#fff;overflow:hidden}
.tree-list{flex:1;min-width:0}
.branch{position:relative}
.branch ul{position:relative;margin-left:11px;border-left:1px dotted #888}
.branch ul li{position:relative;display:flex;align-items:center;gap:4px;height:16px;margin-left:19px;padding-left:11px;white-space:nowrap}
.branch ul::before{content:"";position:absolute;left:19px;top:0;bottom:8px;border-left:1px dotted #888}
.branch ul li::before{content:"";position:absolute;left:0;top:8px;width:10px;border-top:1px dotted #888}
.branch li>.n{margin-left:-4px}
.node{display:flex;align-items:center;gap:5px;height:16px;padding-left:5px}
.node .chev{width:11px;height:10px}
.node .ico{margin-left:1px}
.node .n{margin-right:-5px}
mark{margin-left:-4px;padding-left:4px;background:#d9d9d9;color:#000}
.picked .ico:first-child{background:#d9d9d9}
.picked .twin{margin-left:-3px}
.new{margin:-7px 0 0 -4px;font-size:10px;line-height:10px;color:#000;background:#ffd800}
.vscroll{flex:none;width:16px;display:flex;flex-direction:column;justify-content:space-between;background:#f0f0f0}
.vscroll .thumb{height:210px;margin:auto 0 8px;background:#cdcdcd}

.content{flex:1;min-width:0;display:flex;flex-direction:column;margin-left:5px;margin-top:-2px}
.viewport{position:relative;flex:none;height:263px;background:#000;overflow:hidden}
.scene{display:block;width:100%;height:263px}
.axis-no{fill:#fff;font:14px "Liberation Sans",sans-serif;text-anchor:middle}
.float-panel{position:absolute;left:9px;top:2px;width:167px;height:178px;display:flex;flex-direction:column;border:1px solid #444;background:#fff}
.float-panel h3{height:31px;padding:7px 8px;color:#999}
.checks{flex:1;margin:0 1px;padding:2px 3px;border:2px solid #828790;border-width:1px 1px 2px}
.checks label{display:flex;align-items:center;gap:4px;height:12px;line-height:12px}
input[type=checkbox]{width:11px;height:11px;margin:0;appearance:none;border:1px solid #707070;background:#fff}
input[type=checkbox]:checked{background:#fff url("data:image/svg+xml,%3Csvg xmlns='http://www.w3.org/2000/svg' viewBox='0 0 9 9'%3E%3Cpath d='M1 4.500l2.500 2.500L8 2' fill='none' stroke='%23333'/%3E%3C/svg%3E")}

.num{display:flex;align-items:center;gap:3px;margin-right:4px;color:#777}
.rot{display:flex;align-items:center;gap:8px;margin-right:3px}
.spin{position:relative}
.spin input{display:block;width:58px;height:22px;padding:0 17px 0 0;border:1px solid #707070;background:#f4f4f4;color:#888;text-align:right}
.spin.wide input{width:68px}
.spin::before,.spin::after{content:"";position:absolute;right:4px;border:3px solid transparent}
.spin::before{top:4px;border-top:none;border-bottom-color:#555}
.spin::after{bottom:4px;border-bottom:none;border-top-color:#555}

.rebar{flex:1;min-height:0;display:flex;padding:1px 2px 1px 0}
.rebar-grip{flex:none;width:13px;padding:3px 1px;background:radial-gradient(circle,#bbb 1px,transparent 1px) 0 14px/5px 5px}
.rebar-grip button{display:block;background:#f0f0f0}
.rebar-grip svg{display:block;width:10px;height:10px}
.rebar-body{flex:1;min-width:0;display:flex;flex-direction:column}
.rebar-tools{height:29px;background:linear-gradient(#fdfdfd,#f0f0f0)}
.total{margin-left:4px}
.grid-wrap{flex:1;display:flex;flex-direction:column;justify-content:space-between;border:1px solid #a0a0a0;background:#fff;padding:0 1px 1px 0;overflow:hidden}
.grid{width:100%;table-layout:fixed;border-collapse:collapse;white-space:nowrap}
.grid th,.grid td{padding:0 1px;border-right:1px solid #c0c0c0;border-bottom:1px solid #c0c0c0;font-weight:400;overflow:hidden;text-align:left}
.grid th{text-align:center;background:linear-gradient(#fff,#f0f0f0)}
.grid th.left{text-align:left}
.grid thead tr{height:20px}
.grid th.hot{background:linear-gradient(#f8d896,#f0bc60);color:#602060}
.grid tbody tr{height:29px}
.grid tbody tr.blank{height:19px}
.grid .filled td{background:#ccffd9}
.grid td:nth-child(2){border-right-color:#000}
.grid td.mid{text-align:center}
.grid .current th{background:#ffd48a;color:#602060}
.grid .filled .shape{padding:0}
.grid .current .shape{background:#aeebda}
.shape-svg{display:block;width:150px;height:28px;margin:0 auto;overflow:hidden}
.shape-svg text{font:11px "Liberation Sans",sans-serif}
.shape-svg text:not([fill]){fill:#000}
.c-idx{width:32px}
.c-name{width:73px}
.c-dia{width:56px}
.c-lvl{width:36px}
.c-no{width:33px}
.c-shape{width:273px}
.c-desc{width:156px}
.c-len{width:61px}
.c-cnt{width:39px}
.c-loss{width:32px}
.c-formula{width:auto}
.hscroll{flex:none;display:flex;height:16px;background:#f0f0f0}
.hscroll svg,.vscroll svg{width:16px;height:16px}
.track{flex:1}
.hscroll .thumb{width:50%;height:16px;background:#cdcdcd}

.statusbar{flex:none;display:flex;align-items:center;gap:2px;height:22px;padding:1px 0}
.statusbar>span{height:19px;padding:0 1px;line-height:18px;white-space:nowrap;border:1px solid #d4d4d4;background:linear-gradient(#fff,#f4f4f4)}
.s-pos{width:148px}
.s-h{width:78px}
.s-b{width:98px}
.s-c{width:48px}
.s-fill{flex:1}
.s-fps{width:71px}

.taskbar{flex:none;display:flex;align-items:center;height:40px;background:#000c10;color:#fff}
.start{width:48px;height:40px;background:#000}
.start svg{width:16px;height:16px;vertical-align:middle}
.search{display:flex;align-items:center;gap:6px;width:344px;height:40px;padding:0 14px 0 8px;background:#333}
.search>svg:first-child{width:22px;height:22px}
.search input{flex:1;min-width:0;padding:0;border:none;outline:none;background:none;font-size:14px}
.search input::placeholder{color:#a0a0a0}
.search .mic{width:14px;height:20px}
.apps{display:flex;margin-left:1px}
.apps button{width:44px;height:40px;margin-right:7px;border-bottom:3px solid transparent}
.apps button:nth-child(n+5){margin-right:1px}
.apps svg{display:block;width:24px;height:24px;margin:3px auto 0}
.apps .open{border-bottom-color:#76b9ed}
.apps .active{background:#333d42;border-bottom-color:#76b9ed}
.links{margin-left:11px}
.cpu{width:90px;line-height:17px;text-align:center}
.tray{display:flex;align-items:center;gap:8px;margin-left:-2px}
.tray svg{width:16px;height:16px}
.tray .kb{width:24px}
.ime{width:16px;font-size:18px;text-align:center}
.clock{width:94px;line-height:19px;text-align:center}
.notice{position:relative;width:28px;height:28px;margin-left:auto;margin-right:14px}
.notice svg{width:26px;height:26px}
.notice b{position:absolute;right:-4px;bottom:-3px;width:16px;height:16px;border:1px solid #888;border-radius:8px;background:#333;font-size:11px;line-height:14px}

.imebar{position:absolute;right:191px;top:3px;display:flex;align-items:center;gap:6px;height:24px;padding:0 3px 0 30px;border:1px solid #b0c8e0;background:#fff}
.imebar::before{content:"";position:absolute;left:2px;top:-4px;width:46px;height:4px;border-radius:0 0 20px 20px;background:#3cb858}
.s-logo{position:absolute;left:-4px;top:-3px;width:28px;height:26px}
```
